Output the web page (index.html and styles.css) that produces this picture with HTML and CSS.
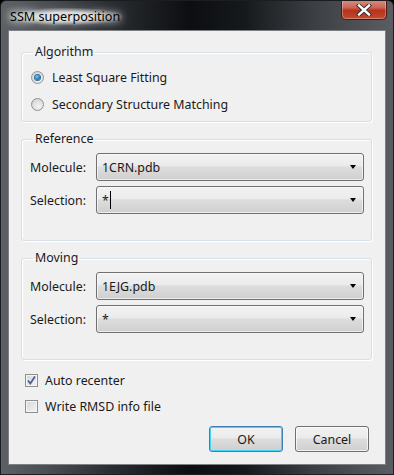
FILE: index.html
```html
<!DOCTYPE html>
<html lang="en">
<head>
    <meta charset="UTF-8">
    <title>SSM superposition</title>
    <link rel="stylesheet" href="styles.css">
</head>
<body>

    <div class="window">
        <div class="titlebar">
            <span class="title">SSM superposition</span>
            <div class="close-btn">
                <svg width="16" height="12" viewBox="0 0 16 12">
                    <path d="M3 1.5 L13 10.5 M13 1.5 L3 10.5" stroke="#2b2b2b" stroke-width="4.2" stroke-linecap="square"/>
                    <path d="M3 1.5 L13 10.5 M13 1.5 L3 10.5" stroke="#ffffff" stroke-width="2.4" stroke-linecap="square"/>
                </svg>
            </div>
        </div>

        <div class="client">
            <!-- Algorithm -->
            <fieldset class="group group-algo">
                <legend>Algorithm</legend>
                <div class="radio-row"><span class="radio checked"></span>Least Square Fitting</div>
                <div class="radio-row"><span class="radio"></span>Secondary Structure Matching</div>
            </fieldset>

            <!-- Reference -->
            <fieldset class="group">
                <legend>Reference</legend>
                <div class="field-grid">
                    <span class="field-label">Molecule:</span>
                    <div class="combo"><span class="combo-text">1CRN.pdb</span><span class="arrow"></span></div>
                    <span class="field-label">Selection:</span>
                    <div class="combo"><span class="combo-text">*<span class="caret"></span></span><span class="arrow"></span></div>
                </div>
            </fieldset>

            <!-- Moving -->
            <fieldset class="group">
                <legend>Moving</legend>
                <div class="field-grid">
                    <span class="field-label">Molecule:</span>
                    <div class="combo"><span class="combo-text">1EJG.pdb</span><span class="arrow"></span></div>
                    <span class="field-label">Selection:</span>
                    <div class="combo"><span class="combo-text">*</span><span class="arrow"></span></div>
                </div>
            </fieldset>

            <div class="check-row">
                <span class="checkbox">
                    <svg width="11" height="11" viewBox="0 0 11 11">
                        <path d="M2 5.5 L4.3 8.5 L9 1.5" fill="none" stroke="#4a5a96" stroke-width="1.7"/>
                    </svg>
                </span>
                Auto recenter
            </div>
            <div class="check-row">
                <span class="checkbox"></span>
                Write RMSD info file
            </div>

            <div class="buttons">
                <button class="button default">OK</button>
                <button class="button">Cancel</button>
            </div>
        </div>
    </div>

</body>
</html>
```

FILE: styles.css
```css
body {
    margin: 0;
    background: #000;
    font-family: 'Noto Sans', 'Noto Sans CJK JP', sans-serif;
    font-size: 12.4px;
    color: #1a1a1a;
}

.window {
    width: 394px;
    height: 475px;
    box-sizing: border-box;
    border: 1px solid #1b1d20;
    border-radius: 6px 6px 0 0;
    background: linear-gradient(90deg, #5c6165 0%, #4a4e52 12%, #2a2d31 28%, #0c0e11 48%, #16191c 62%, #3c4044 80%, #5a5e62 100%);
    overflow: hidden;
}

.titlebar {
    height: 29px;
    display: flex;
    justify-content: space-between;
    align-items: flex-start;
    padding-left: 8px;
    padding-right: 6px;
}

.title {
    margin-top: 7px;
    padding: 0 2px 0 1px;
    color: #000;
    font-size: 12.6px;
    border-radius: 10px;
    background: radial-gradient(ellipse at center, rgba(255, 255, 255, 0.75) 35%, rgba(255, 255, 255, 0) 75%);
    text-shadow: 0 0 6px #fff, 0 0 10px #fff, 0 0 14px rgba(255, 255, 255, 0.8);
}

.close-btn {
    width: 46px;
    height: 20px;
    margin-top: -1px;
    box-sizing: border-box;
    border: 1px solid #4a1a14;
    border-top: none;
    border-radius: 0 0 5px 5px;
    background: linear-gradient(180deg, #d88e80 0%, #c86656 40%, #b8321c 55%, #c44a30 100%);
    display: flex;
    justify-content: center;
    align-items: center;
    box-shadow: inset 0 0 0 1px rgba(255, 255, 255, 0.3);
}

.client {
    margin: 0 7px;
    height: 435px;
    box-sizing: border-box;
    border: 1px solid #7c7f83;
    background: #f0f0f0;
    padding: 13px 13px 0 12px;
    display: flex;
    flex-direction: column;
}

.group {
    margin: 0 0 9px 0;
    padding: 6px 7px 26px 7px;
    border: 1px solid #d5dfe5;
    border-radius: 3px;
    box-shadow: inset 1px 1px 0 #fff, 1px 1px 0 #fff;
}

.group legend {
    padding: 0 2px;
    margin-left: 4px;
    line-height: 16px;
}

.group-algo {
    padding: 4px 7px 3px 7px;
}

.radio-row {
    height: 27px;
    display: flex;
    align-items: center;
    gap: 8px;
    padding-left: 2px;
}

.radio {
    width: 11px;
    height: 11px;
    border: 1px solid #8f9396;
    border-radius: 50%;
    background: radial-gradient(circle at 60% 65%, #f4f4f4 0%, #d8d8d8 70%, #c8c8c8 100%);
    display: inline-flex;
    justify-content: center;
    align-items: center;
}

.radio.checked::after {
    content: "";
    width: 5px;
    height: 5px;
    border-radius: 50%;
    background: radial-gradient(circle at 40% 35%, #7ed0ff 0%, #1c7fc0 55%, #0a4d7e 100%);
    box-shadow: 0 0 0 1px #3a6f98;
}

.field-grid {
    display: grid;
    grid-template-columns: 67px 1fr;
    row-gap: 5px;
    align-items: center;
}

.field-label {
    padding-left: 1px;
}

.combo {
    height: 28px;
    box-sizing: border-box;
    border: 1px solid #707070;
    border-radius: 3px;
    background: linear-gradient(180deg, #f2f2f2 0%, #ebebeb 45%, #dddddd 50%, #cfcfcf 100%);
    display: flex;
    align-items: center;
    justify-content: space-between;
    padding: 0 7px 0 5px;
    box-shadow: inset 0 0 0 1px rgba(255, 255, 255, 0.6);
}

.combo-text {
    display: flex;
    align-items: center;
}

.caret {
    width: 1px;
    height: 18px;
    background: #000;
    margin-left: 1px;
}

.arrow {
    width: 0;
    height: 0;
    border-left: 3.5px solid transparent;
    border-right: 3.5px solid transparent;
    border-top: 4px solid #000;
}

.check-row {
    height: 26px;
    display: flex;
    align-items: center;
    gap: 7px;
    padding-left: 4px;
    margin-top: -2px;
}

.check-row + .check-row {
    margin-top: 0;
}

.checkbox {
    width: 11px;
    height: 11px;
    border: 1px solid #8e8f8f;
    background: linear-gradient(135deg, #d8d8d8 0%, #f2f2f2 100%);
    box-shadow: inset 0 0 0 1px #f4f4f4;
    display: inline-flex;
    justify-content: center;
    align-items: center;
}

.buttons {
    display: flex;
    justify-content: flex-end;
    gap: 12px;
    margin-top: 7px;
    padding-right: 3px;
}

.button {
    width: 74px;
    height: 26px;
    font-family: inherit;
    font-size: 12.4px;
    color: #1a1a1a;
    border: 1px solid #707070;
    border-radius: 3px;
    background: linear-gradient(180deg, #f2f2f2 0%, #ebebeb 45%, #dddddd 50%, #cfcfcf 100%);
    box-shadow: inset 0 0 0 1px rgba(255, 255, 255, 0.7);
    padding: 0;
}

.button.default {
    border-color: #3c7fb1;
    box-shadow: inset 0 0 0 1px #48d3fb;
}
```
